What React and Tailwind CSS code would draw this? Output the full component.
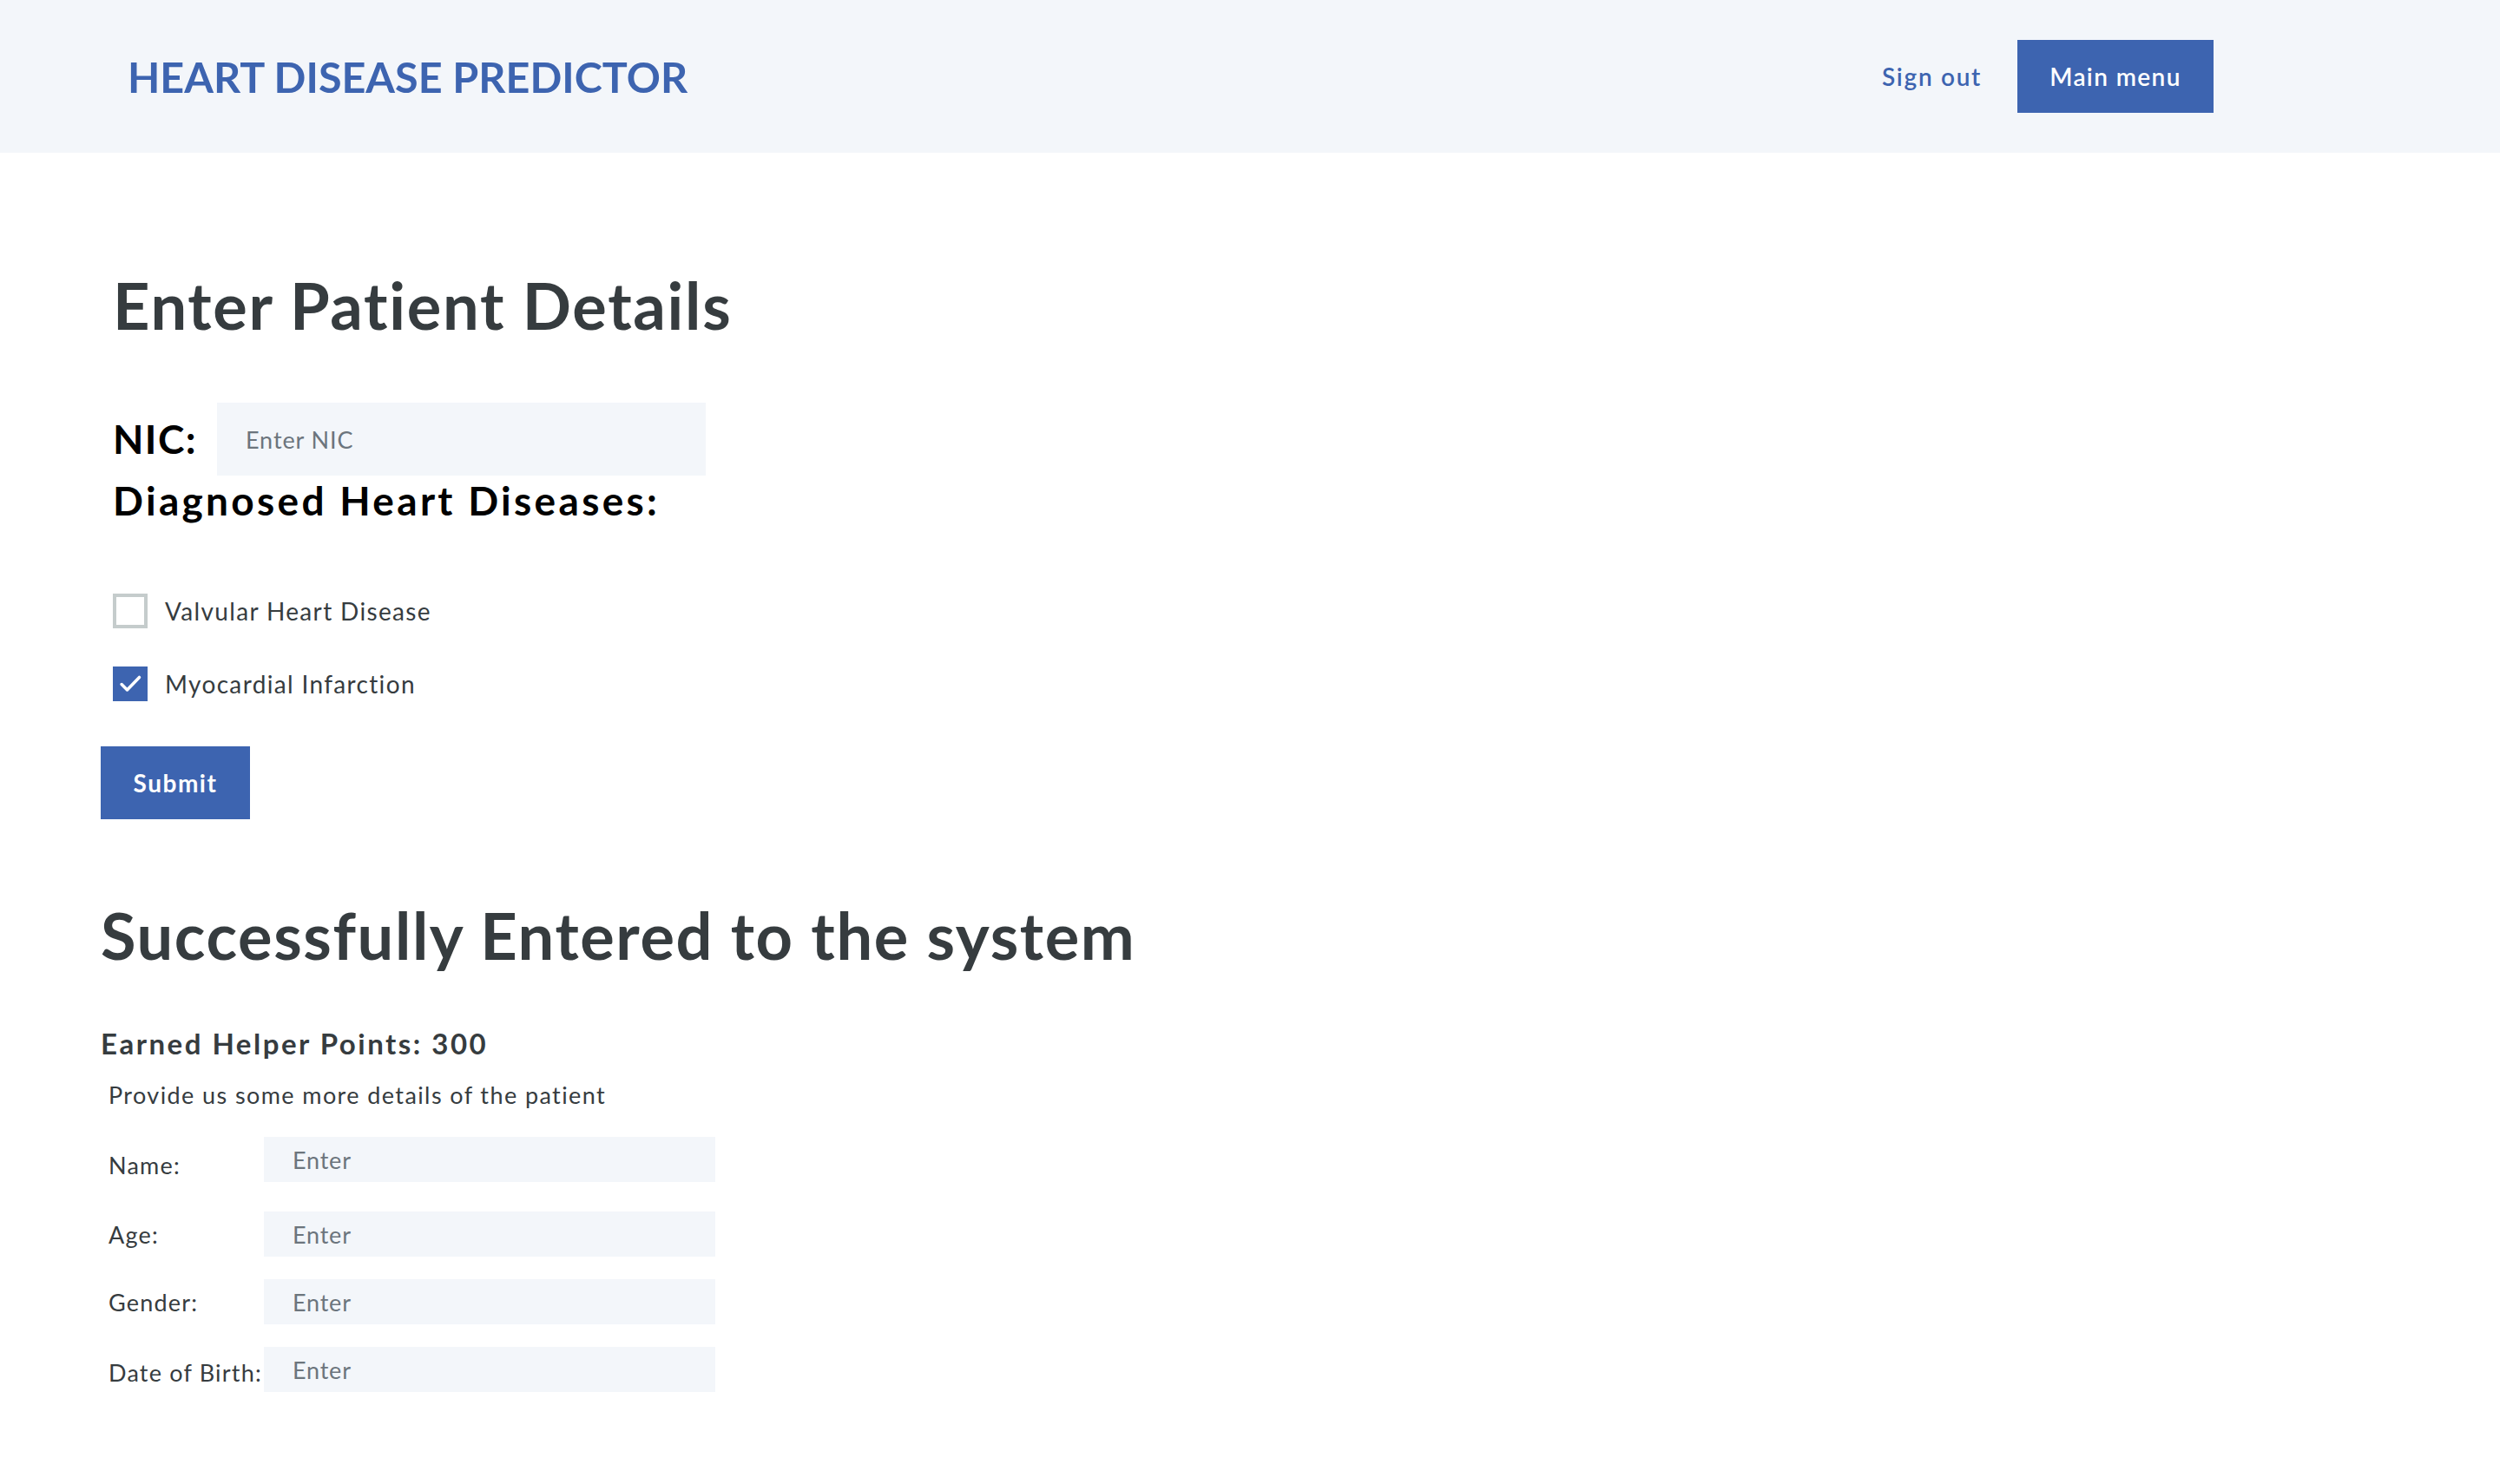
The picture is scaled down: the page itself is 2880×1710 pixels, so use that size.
import { useState } from "react"

const details = [
  { label: "Name:", gap: "mt-[35px]", shift: "mt-[12px]" },
  { label: "Age:", gap: "mt-[34px]", shift: "" },
  { label: "Gender:", gap: "mt-[26px]", shift: "" },
  { label: "Date of Birth:", gap: "mt-[26px]", shift: "mt-[6px]" },
]

function Checkbox({ checked, onChange, label }) {
  return (
    <label className="flex items-center gap-[20px] cursor-pointer select-none" onClick={onChange}>
      {checked ? (
        <span className="w-[40px] h-[40px] bg-[#3d64b0] flex items-center justify-center">
          <svg width="28" height="28" viewBox="0 0 24 24" fill="none" stroke="white" strokeWidth="3" strokeLinecap="round" strokeLinejoin="round">
            <path d="M3.5 12.5l5.5 5.5L21 5.5" />
          </svg>
        </span>
      ) : (
        <span className="w-[40px] h-[40px] border-4 border-[#c5cccc] bg-white" />
      )}
      <span className="text-[28px] leading-none tracking-[1.35px] text-[#363c3f]">{label}</span>
    </label>
  )
}

export default function App() {
  const [valvular, setValvular] = useState(false)
  const [myocardial, setMyocardial] = useState(true)

  return (
    <div className="min-h-screen bg-white font-['Lato',sans-serif]">
      {/* Top bar */}
      <header className="h-[176px] bg-[#f3f6fa] flex items-center justify-between pl-[147px] pr-[330px]">
        <a className="text-[48.5px] leading-none font-bold text-[#3d64b0]">HEART DISEASE PREDICTOR</a>
        <nav className="flex items-center gap-[41px]">
          <a className="text-[28px] leading-none font-semibold tracking-[1.7px] text-[#3d64b0]">Sign out</a>
          <button className="w-[226px] h-[84px] bg-[#3d64b0] text-white text-[28px] leading-none font-semibold tracking-[1.4px]">
            Main menu
          </button>
        </nav>
      </header>

      <main className="pl-[116px]">
        {/* Patient form */}
        <div className="pl-[14px]">
          <h1 className="mt-[139px] text-[74px] leading-none font-bold tracking-[1.7px] text-[#363c3f]">Enter Patient Details</h1>
          <div className="mt-[75px] flex items-center">
            <span className="w-[120px] text-[46px] leading-none font-bold tracking-[1.4px] text-black">NIC:</span>
            <input
              placeholder="Enter NIC"
              className="w-[563px] h-[84px] bg-[#f3f6fa] pl-[33px] text-[27px] tracking-[0.9px] outline-none placeholder:text-[#6c757d]"
            />
          </div>
          <h3 className="mt-[6px] text-[46px] leading-none font-bold tracking-[3.3px] text-black">Diagnosed Heart Diseases:</h3>
          <div className="mt-[84px] flex flex-col gap-[44px]">
            <Checkbox checked={valvular} onChange={() => setValvular(!valvular)} label="Valvular Heart Disease" />
            <Checkbox checked={myocardial} onChange={() => setMyocardial(!myocardial)} label="Myocardial Infarction" />
          </div>
        </div>
        <button className="mt-[52px] w-[172px] h-[84px] bg-[#3d64b0] text-white text-[28px] leading-none font-bold tracking-[1.5px]">
          Submit
        </button>

        {/* Result */}
        <h1 className="mt-[97px] text-[74px] leading-none font-bold tracking-[1.6px] text-[#363c3f]">Successfully Entered to the system</h1>
        <h4 className="mt-[71px] text-[33px] leading-none font-bold tracking-[2.5px] text-[#363c3f]">Earned Helper Points: 300</h4>
        <div className="pl-[9px] pb-[100px]">
          <p className="mt-[29px] text-[27px] leading-none tracking-[1.4px] text-[#363c3f]">Provide us some more details of the patient</p>
          {details.map((d) => (
            <div key={d.label} className={`${d.gap} flex items-center`}>
              <span className={`${d.shift} w-[179px] text-[27px] leading-none tracking-[1.2px] text-[#363c3f]`}>{d.label}</span>
              <input
                placeholder="Enter"
                className="w-[520px] h-[52px] bg-[#f3f6fa] pl-[33px] text-[27px] tracking-[0.8px] outline-none placeholder:text-[#6c757d]"
              />
            </div>
          ))}
        </div>
      </main>
    </div>
  )
}
